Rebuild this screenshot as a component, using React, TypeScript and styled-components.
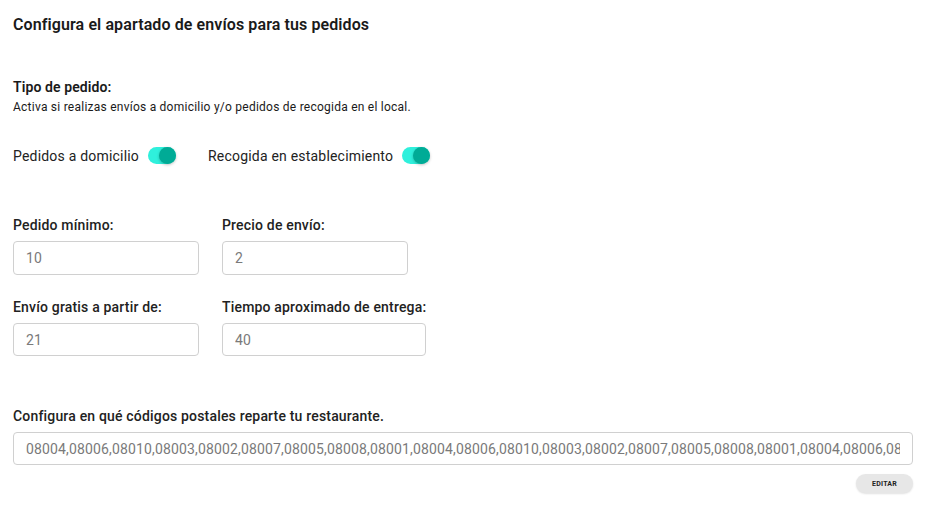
import styled, { createGlobalStyle } from "styled-components";

const GlobalStyle = createGlobalStyle`
    body {
        margin: 0;
        background: #ffffff;
        font-family: Roboto, "Liberation Sans", Arial, sans-serif;
        color: #1a1a1a;
    }
`;

const Page = styled.div`
    padding: 12px 14px 20px 13px;
`;

const Title = styled.h1`
    font-size: 16px;
    font-weight: 600;
    letter-spacing: 0.1px;
    margin: 3px 0 0;
    line-height: 20px;
`;

const Section = styled.section`
    margin-top: ${props => props.$top ?? 0}px;
`;

const SectionTitle = styled.h2`
    font-size: 14px;
    font-weight: 600;
    letter-spacing: 0.1px;
    margin: 0;
    line-height: 18px;
`;

const Hint = styled.p`
    font-size: 12px;
    letter-spacing: 0.24px;
    margin: 3px 0 0;
    line-height: 16px;
`;

const ToggleRow = styled.div`
    display: flex;
    gap: 32px;
    margin-top: 32px;
`;

const ToggleItem = styled.label`
    display: flex;
    align-items: center;
    gap: 9px;
    font-size: 14px;
    letter-spacing: 0.2px;
    color: #222;
`;

const Track = styled.span`
    position: relative;
    display: inline-block;
    width: 28px;
    height: 17px;
    border-radius: 9px;
    background: #2ff0dc;
`;

const Thumb = styled.span`
    position: absolute;
    top: 0;
    right: 0;
    width: 17px;
    height: 17px;
    border-radius: 50%;
    background: #00ab96;
    box-shadow: 0 1px 3px rgba(0, 0, 0, 0.25);
`;

const Fields = styled.div`
    display: flex;
    flex-direction: column;
    gap: 23px;
    margin-top: 52px;
`;

const FieldRow = styled.div`
    display: flex;
    gap: 23px;
    align-items: flex-start;
`;

const Field = styled.div`
    display: flex;
    flex-direction: column;
    min-width: 186px;
`;

const Label = styled.label`
    font-size: 14px;
    font-weight: 500;
    letter-spacing: 0.18px;
    line-height: 18px;
    color: #222;
    white-space: nowrap;
`;

const Input = styled.input`
    box-sizing: border-box;
    width: 0;
    min-width: 100%;
    height: ${props => props.$h ?? 34}px;
    margin-top: ${props => props.$gap ?? 7}px;
    padding: 0 12px;
    border: 1px solid #d0d0d0;
    border-radius: 4px;
    font-family: inherit;
    font-size: 14px;
    letter-spacing: 0.15px;
    color: #7a7a7a;
    background: #fff;
    outline: none;
`;

const ButtonRow = styled.div`
    display: flex;
    justify-content: flex-end;
    margin-top: 9px;
`;

const EditButton = styled.button`
    width: 57px;
    height: 19px;
    border: none;
    border-radius: 10px;
    background: #e7e7e7;
    font-family: inherit;
    font-size: 7px;
    font-weight: 700;
    color: #222;
    letter-spacing: 0.2px;
    box-shadow: 0 1px 2px rgba(0, 0, 0, 0.12);
    cursor: pointer;
`;

const codes = "08004,08006,08010,08003,08002,08007,08005,08008,08001,08004,08006,08010,08003,08002,08007,08005,08008,08001,08004,08006,08010,08003";

const Toggle = ({ label }: { label: string }) => (
    <ToggleItem>
        {label}
        <Track>
            <Thumb />
        </Track>
    </ToggleItem>
);

const App = () => {
    return (
        <Page>
            <GlobalStyle />
            <Title>Configura el apartado de envíos para tus pedidos</Title>

            <Section $top={43}>
                <SectionTitle>Tipo de pedido:</SectionTitle>
                <Hint>Activa si realizas envíos a domicilio y/o pedidos de recogida en el local.</Hint>
                <ToggleRow>
                    <Toggle label="Pedidos a domicilio" />
                    <Toggle label="Recogida en establecimiento" />
                </ToggleRow>
            </Section>

            <Fields>
                <FieldRow>
                    <Field>
                        <Label>Pedido mínimo:</Label>
                        <Input defaultValue="10" />
                    </Field>
                    <Field>
                        <Label>Precio de envío:</Label>
                        <Input defaultValue="2" />
                    </Field>
                </FieldRow>
                <FieldRow>
                    <Field>
                        <Label>Envío gratis a partir de:</Label>
                        <Input defaultValue="21" $h={33} />
                    </Field>
                    <Field>
                        <Label>Tiempo aproximado de entrega:</Label>
                        <Input defaultValue="40" $h={33} />
                    </Field>
                </FieldRow>
            </Fields>

            <Section $top={50}>
                <Label>Configura en qué códigos postales reparte tu restaurante.</Label>
                <Input defaultValue={codes} $h={33} $gap={7} />
                <ButtonRow>
                    <EditButton>EDITAR</EditButton>
                </ButtonRow>
            </Section>
        </Page>
    );
};

export default App;
